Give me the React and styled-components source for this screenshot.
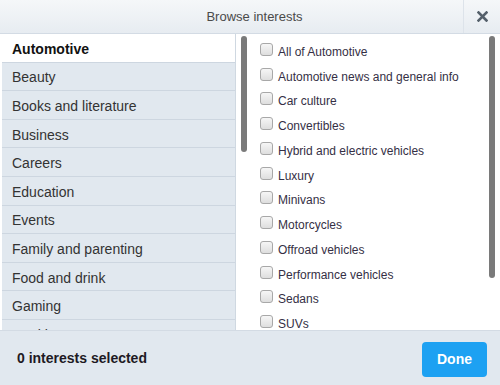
import React from "react";
import styled, { createGlobalStyle } from "styled-components";

const Global = createGlobalStyle`
  html, body { margin: 0; padding: 0; background: #fff; }
  body { font-family: "Liberation Sans", Arial, sans-serif; }
`;

const Dialog = styled.div`
  width: 500px;
  height: 385px;
  display: flex;
  flex-direction: column;
  background: #fff;
  overflow: hidden;
`;

const Header = styled.div`
  height: 33px;
  flex: none;
  display: flex;
  background: linear-gradient(#f5f7f9, #e7ecf1);
  border-bottom: 1px solid #d3dbe4;
`;

const Title = styled.div`
  flex: 1;
  display: flex;
  align-items: center;
  justify-content: center;
  padding-left: 46px;
  font-size: 13px;
  color: #4a4a4a;
`;

const Close = styled.div`
  width: 36px;
  display: flex;
  align-items: center;
  justify-content: center;
  border-left: 1px solid #dde3ea;
`;

const Body = styled.div`
  height: 296px;
  flex: none;
  display: flex;
  overflow: hidden;
`;

const Categories = styled.div`
  width: 233px;
  margin-left: 2px;
  flex: none;
  background: #e1e8ef;
  border-right: 1px solid #cfd8e1;
  display: flex;
  flex-direction: column;
`;

const Category = styled.div`
  height: 28.6px;
  box-sizing: border-box;
  padding: 2px 0 0 10px;
  flex: none;
  display: flex;
  align-items: center;
  font-size: 14px;
  color: ${(p) => (p.$active ? "#111" : "#333")};
  font-weight: ${(p) => (p.$active ? "bold" : "normal")};
  background: ${(p) => (p.$active ? "#fff" : "transparent")};
  border-bottom: 1px solid #cdd6e0;
`;

const Track = styled.div`
  width: ${(p) => p.$w}px;
  flex: none;
  padding-top: 2px;
  padding-left: ${(p) => p.$pl}px;
  box-sizing: border-box;
`;

const Thumb = styled.div`
  width: 6px;
  height: ${(p) => p.$h}px;
  background: #7a7a7a;
  border-radius: 3px;
`;

const Items = styled.div`
  flex: 1;
  padding: 5.5px 0 0 12px;
  display: flex;
  flex-direction: column;
`;

const Item = styled.label`
  height: 24.75px;
  flex: none;
  display: flex;
  align-items: center;
  gap: 5px;
  font-size: 12px;
  color: #352f45;
`;

const Box = styled.span`
  width: 11px;
  height: 11px;
  border: 1px solid #a8a8a8;
  border-radius: 3px;
  background: linear-gradient(#f6f6f6, #dedede);
  margin-top: -5px;
  flex: none;
`;

const Footer = styled.div`
  flex: 1;
  display: flex;
  align-items: center;
  justify-content: space-between;
  padding: 0 13px 0 17px;
  background: #e1e8ef;
  border-top: 1px solid #d3dbe4;
`;

const Count = styled.div`
  font-size: 14px;
  font-weight: bold;
  color: #1e1a24;
`;

const Done = styled.button`
  width: 65px;
  height: 35px;
  border: none;
  border-radius: 4px;
  background: #1da1f2;
  color: #fff;
  font-family: inherit;
  font-size: 14px;
  font-weight: bold;
  margin-top: 2px;
`;

const categories = [
  "Automotive",
  "Beauty",
  "Books and literature",
  "Business",
  "Careers",
  "Education",
  "Events",
  "Family and parenting",
  "Food and drink",
  "Gaming",
  "Health",
  "Hobbies",
];

const items = [
  "All of Automotive",
  "Automotive news and general info",
  "Car culture",
  "Convertibles",
  "Hybrid and electric vehicles",
  "Luxury",
  "Minivans",
  "Motorcycles",
  "Offroad vehicles",
  "Performance vehicles",
  "Sedans",
  "SUVs",
  "Trucks",
];

export default function App() {
  return (
    <>
      <Global />
      <Dialog>
        <Header>
          <Title>Browse interests</Title>
          <Close>
            <svg width="11" height="11" viewBox="0 0 11 11">
              <path d="M1.5 1.5 L9.5 9.5 M9.5 1.5 L1.5 9.5" stroke="#55606b" strokeWidth="2.6" strokeLinecap="square" />
            </svg>
          </Close>
        </Header>
        <Body>
          <Categories>
            {categories.map((c, i) => (
              <Category key={c} $active={i === 0}>
                {c}
              </Category>
            ))}
          </Categories>
          <Track $w={12} $pl={5}>
            <Thumb $h={116} />
          </Track>
          <Items>
            {items.map((t) => (
              <Item key={t}>
                <Box />
                {t}
              </Item>
            ))}
          </Items>
          <Track $w={11} $pl={0}>
            <Thumb $h={242} />
          </Track>
        </Body>
        <Footer>
          <Count>0 interests selected</Count>
          <Done>Done</Done>
        </Footer>
      </Dialog>
    </>
  );
}
